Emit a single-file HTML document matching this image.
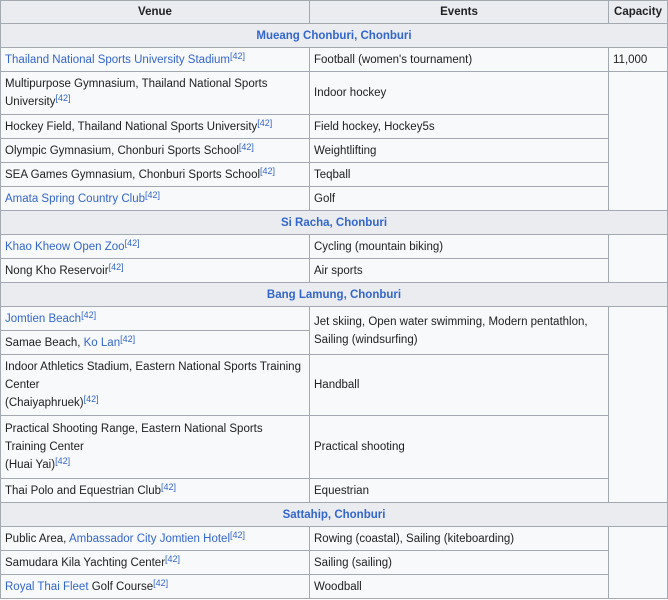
<!DOCTYPE html>
<html><head><style>
body{margin:0;background:#fff;}
table{border-collapse:collapse;table-layout:fixed;width:667px;font-family:"Liberation Sans",Arial,sans-serif;font-size:11.5px;line-height:18px;color:#202122;background:#f8f9fa;}
td,th{border:1px solid #a2a9b1;padding:2px 4px;vertical-align:middle;white-space:nowrap;overflow:hidden;}
th{background:#eaecf0;font-weight:bold;text-align:center;}
th.s{color:#3366cc;}
a{color:#3366cc;text-decoration:none;}
sup{font-size:9px;line-height:0;vertical-align:4px;color:#3366cc;}
tr{height:24px;}
</style></head><body>
<table>
<colgroup><col style="width:309px"><col style="width:299px"><col style="width:59px"></colgroup>
<tr style="height:23px"><th style="padding:1px 4px">Venue</th><th style="padding:1px 4px">Events</th><th style="padding:1px 4px">Capacity</th></tr>
<tr><th class="s" colspan="3">Mueang Chonburi, Chonburi</th></tr>
<tr><td><a>Thailand National Sports University Stadium</a><sup>[42]</sup></td><td>Football (women's tournament)</td><td>11,000</td></tr>
<tr style="height:43px"><td>Multipurpose Gymnasium, Thailand National Sports<br>University<sup>[42]</sup></td><td>Indoor hockey</td><td rowspan="5"></td></tr>
<tr><td>Hockey Field, Thailand National Sports University<sup>[42]</sup></td><td>Field hockey, Hockey5s</td></tr>
<tr><td>Olympic Gymnasium, Chonburi Sports School<sup>[42]</sup></td><td>Weightlifting</td></tr>
<tr><td>SEA Games Gymnasium, Chonburi Sports School<sup>[42]</sup></td><td>Teqball</td></tr>
<tr><td><a>Amata Spring Country Club</a><sup>[42]</sup></td><td>Golf</td></tr>
<tr><th class="s" colspan="3">Si Racha, Chonburi</th></tr>
<tr><td><a>Khao Kheow Open Zoo</a><sup>[42]</sup></td><td>Cycling (mountain biking)</td><td rowspan="2"></td></tr>
<tr><td>Nong Kho Reservoir<sup>[42]</sup></td><td>Air sports</td></tr>
<tr><th class="s" colspan="3">Bang Lamung, Chonburi</th></tr>
<tr><td><a>Jomtien Beach</a><sup>[42]</sup></td><td rowspan="2">Jet skiing, Open water swimming, Modern pentathlon,<br>Sailing (windsurfing)</td><td rowspan="5"></td></tr>
<tr><td>Samae Beach, <a>Ko Lan</a><sup>[42]</sup></td></tr>
<tr style="height:61px"><td>Indoor Athletics Stadium, Eastern National Sports Training<br>Center<br>(Chaiyaphruek)<sup>[42]</sup></td><td>Handball</td></tr>
<tr style="height:63px"><td>Practical Shooting Range, Eastern National Sports<br>Training Center<br>(Huai Yai)<sup>[42]</sup></td><td>Practical shooting</td></tr>
<tr><td>Thai Polo and Equestrian Club<sup>[42]</sup></td><td>Equestrian</td></tr>
<tr><th class="s" colspan="3">Sattahip, Chonburi</th></tr>
<tr><td>Public Area, <a>Ambassador City Jomtien Hotel</a><sup>[42]</sup></td><td>Rowing (coastal), Sailing (kiteboarding)</td><td rowspan="3"></td></tr>
<tr><td>Samudara Kila Yachting Center<sup>[42]</sup></td><td>Sailing (sailing)</td></tr>
<tr><td><a>Royal Thai Fleet</a> Golf Course<sup>[42]</sup></td><td>Woodball</td></tr>
</table>
</body></html>
